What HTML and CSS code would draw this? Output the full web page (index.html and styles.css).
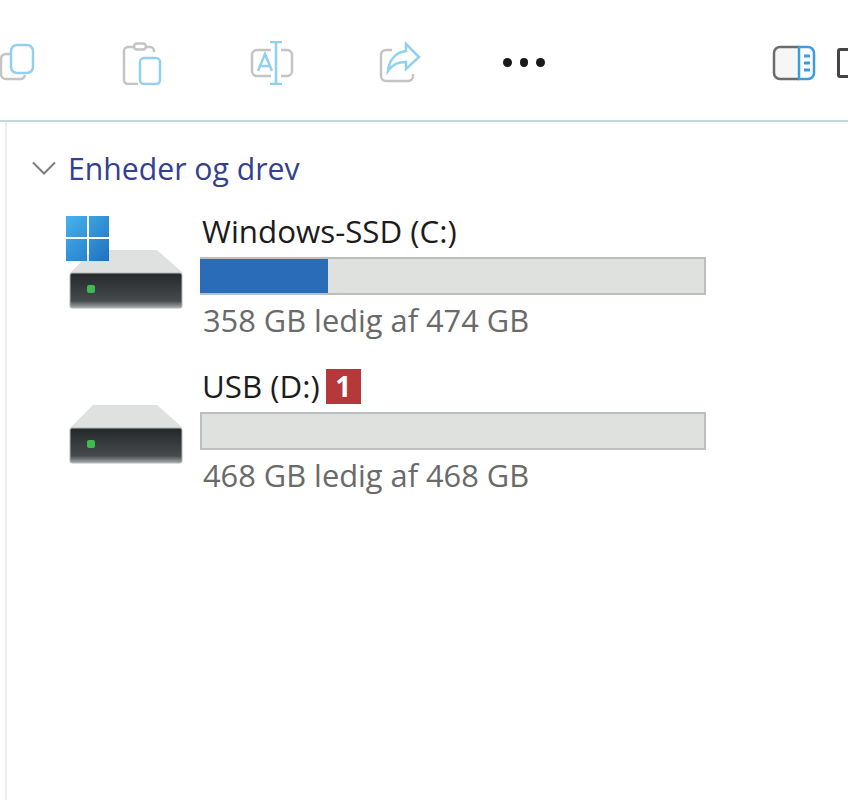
FILE: index.html
```html
<!DOCTYPE html>
<html lang="da">
<head>
    <meta charset="UTF-8">
    <title>Enheder og drev</title>
    <link rel="stylesheet" href="styles.css">
</head>
<body>
    <div class="toolbar">
        <svg class="tool tool-first" viewBox="0 0 44 44" fill="none" stroke-width="2.5">
            <path d="M12 13H7a5 5 0 0 0-5 5v15a5 5 0 0 0 5 5h14a5 5 0 0 0 5-4" stroke="#c4c4c4"/>
            <rect x="12" y="4" width="22" height="28" rx="6" stroke="#93d0f0" fill="#fff"/>
        </svg>
        <svg class="tool" viewBox="0 0 44 44" fill="none" stroke-width="2.5">
            <path d="M13 6H7a4 4 0 0 0-4 4v29a4 4 0 0 0 4 4h10M33 11V10a4 4 0 0 0-4-4h-5" stroke="#c4c4c4"/>
            <rect x="13" y="2.500" width="12" height="6" rx="3" stroke="#c4c4c4"/>
            <rect x="19" y="17" width="20" height="26" rx="4" stroke="#93d0f0"/>
        </svg>
        <svg class="tool" viewBox="0 0 44 44" fill="none" stroke-width="2.5">
            <path d="M21 9H7a5 5 0 0 0-5 5v16a5 5 0 0 0 5 5h14M31 9h6a5 5 0 0 1 5 5v16a5 5 0 0 1-5 5h-6" stroke="#c4c4c4"/>
            <path d="M20 1h12M20 43h12M26 1v42M8 30l7-17 7 17M10.500 25h10" stroke="#93d0f0"/>
        </svg>
        <svg class="tool tool-share" viewBox="0 0 44 44" fill="none" stroke-width="2.500">
            <path d="M14 9H8a5 5 0 0 0-5 5v21a5 5 0 0 0 5 5h22a5 5 0 0 0 5-5v-2" stroke="#c4c4c4"/>
            <path d="M28 3l13 13-13 12v-7c-8 0-13 2-18 9 1-11 8-19 18-20z" stroke="#93d0f0" fill="#fff"/>
        </svg>
        <div class="more"><span></span><span></span><span></span></div>
        <svg class="tool tool-pane" viewBox="0 0 44 44" fill="none">
            <path d="M27 6H8a6 6 0 0 0-6 6v20a6 6 0 0 0 6 6h19" stroke="#6b6b6b" stroke-width="2.500" fill="#f6f6f6"/>
            <path d="M27 6h9a6 6 0 0 1 6 6v20a6 6 0 0 1-6 6h-9z" stroke="#3d9be0" stroke-width="2.500" fill="#fff"/>
            <path d="M32 15h6M32 22h6M32 29h6" stroke="#3d9be0" stroke-width="3"/>
        </svg>
        <div class="cut-icon"></div>
    </div>

    <div class="content">
        <div class="group-head">
            <svg class="chevron" viewBox="0 0 24 14" fill="none"><path d="M1 1.500l11 11 11-11" stroke="#7d7d7d" stroke-width="2"/></svg>
            <span>Enheder og drev</span>
        </div>

        <div class="drive">
            <svg class="drive-icon" viewBox="0 0 120 96">
                <defs>
                    <linearGradient id="front" x1="0" y1="0" x2="0" y2="1">
                        <stop offset="0" stop-color="#25282a"/>
                        <stop offset="0.8" stop-color="#484b4d"/>
                        <stop offset="1" stop-color="#a9abac"/>
                    </linearGradient>
                    <linearGradient id="win" x1="0" y1="0" x2="1" y2="1">
                        <stop offset="0" stop-color="#45b4ee"/>
                        <stop offset="1" stop-color="#1f70bf"/>
                    </linearGradient>
                </defs>
                <path d="M28 35h64l26 23H5z" fill="#dfe1e1"/>
                <rect x="5" y="58" width="112" height="35" rx="2" fill="url(#front)" stroke="#b4b6b6"/>
                <rect x="22" y="70" width="8" height="8" rx="2" fill="#3dbb4e"/>
                <path d="M1 1h21v21H1zM24 1h20v21H24zM1 24h21v22H1zM24 24h20v22H24z" fill="url(#win)"/>
            </svg>
            <div class="drive-info">
                <div class="drive-name">Windows-SSD (C:)</div>
                <div class="bar"><div class="bar-used" style="width: 25.500%"></div></div>
                <div class="drive-free">358 GB ledig af 474 GB</div>
            </div>
        </div>

        <div class="drive">
            <svg class="drive-icon" viewBox="0 0 120 96">
                <path d="M28 35h64l26 23H5z" fill="#dfe1e1"/>
                <rect x="5" y="58" width="112" height="35" rx="2" fill="url(#front)" stroke="#b4b6b6"/>
                <rect x="22" y="70" width="8" height="8" rx="2" fill="#3dbb4e"/>
            </svg>
            <div class="drive-info">
                <div class="drive-name">USB (D:)<span class="badge">1</span></div>
                <div class="bar"></div>
                <div class="drive-free">468 GB ledig af 468 GB</div>
            </div>
        </div>
    </div>
</body>
</html>
```

FILE: styles.css
```css
body {
    margin: 0;
    height: 800px;
    overflow: hidden;
    background: #fff;
    font-family: "Open Sans", sans-serif;
}

/* Toolbar */
.toolbar {
    display: flex;
    align-items: center;
    height: 122px;
    box-sizing: border-box;
    padding-top: 5px;
    border-bottom: 2px solid #c5d6e3;
    overflow: hidden;
}

.tool {
    flex: none;
    width: 44px;
    height: 44px;
    margin-right: 85px;
}

.tool-first {
    margin-left: -1px;
    margin-right: 78px;
}

.tool-share {
    margin-left: -1px;
    margin-right: 83px;
}

.more {
    display: flex;
    gap: 8px;
    width: 42px;
    margin-left: -2px;
}

.more span {
    width: 9px;
    height: 9px;
    border-radius: 50%;
    background: #1a1a1a;
}

.tool-pane {
    margin-left: 227px;
    margin-right: 21px;
}

.cut-icon {
    flex: none;
    width: 20px;
    height: 24px;
    border: 3px solid #444;
    border-radius: 3px;
}

/* Indhold */
.content {
    height: 678px;
    margin-left: 5px;
    border-left: 2px solid #ececec;
    padding: 27px 0 0 25px;
}

.group-head {
    display: flex;
    align-items: center;
    gap: 12px;
    height: 38px;
    margin-bottom: 20px;
    color: #33408f;
    font-size: 30.200px;
}

.chevron {
    width: 24px;
    height: 14px;
}

.drive {
    display: flex;
    height: 155px;
    margin-left: 31px;
}

.drive-icon {
    flex: none;
    width: 120px;
    height: 96px;
    margin: 8px 0 0 2px;
}

.drive-info {
    width: 506px;
    margin-left: 15px;
}

.drive-name {
    display: flex;
    align-items: center;
    gap: 6px;
    height: 48px;
    margin-bottom: 2px;
    padding-left: 2px;
    color: #1c1c1c;
    font-size: 31.300px;
    white-space: pre;
}

.badge {
    width: 35px;
    height: 35px;
    background: #b5383b;
    color: #fff;
    font-size: 28px;
    font-weight: 700;
    line-height: 35px;
    text-align: center;
}

.bar {
    box-sizing: border-box;
    height: 38px;
    border: 2px solid #bcbfbe;
    background: #dfe1df;
}

.bar-used {
    height: 34px;
    margin: 0 0 0 -2px;
    background: #2b6cb8;
}

.drive-free {
    margin-top: 4px;
    padding-left: 3px;
    color: #6a6a6a;
    font-size: 30.800px;
    white-space: nowrap;
}
```
